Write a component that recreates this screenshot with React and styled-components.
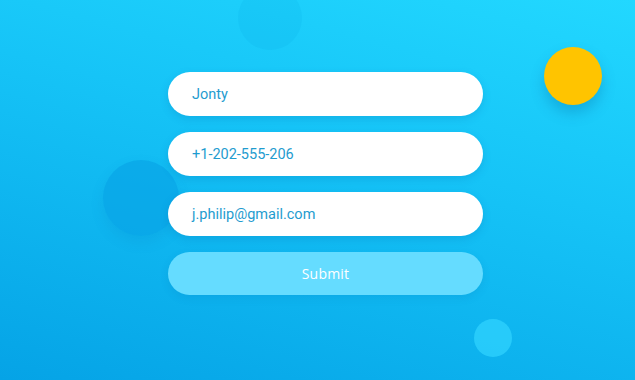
import React from 'react'
import styled, { createGlobalStyle } from 'styled-components'

const GlobalStyle = createGlobalStyle`
  html, body {
    margin: 0;
    padding: 0;
  }
  body {
    font-family: Roboto, "Liberation Sans", sans-serif;
  }
`;

const Page = styled.div`
  position: relative;
  width: 635px;
  height: 380px;
  overflow: hidden;
  background: linear-gradient(195deg, #22d8ff 0%, #16c4f7 40%, #05a3e6 100%);
  display: flex;
  justify-content: center;
  align-items: flex-start;
`;

const Bubble = styled.div`
  position: absolute;
  left: ${({ x }) => x}px;
  top: ${({ y }) => y}px;
  width: ${({ size }) => size}px;
  height: ${({ size }) => size}px;
  border-radius: 50%;
  background: ${({ color }) => color};
  box-shadow: ${({ shadow }) => shadow || 'none'};
`;

const Form = styled.form`
  position: relative;
  z-index: 1;
  margin-top: 72px;
  margin-left: 16px;
  width: 315px;
  display: flex;
  flex-direction: column;
  gap: 16px;
`;

const Field = styled.div`
  height: 44px;
  border-radius: 22px;
  background: #ffffff;
  display: flex;
  align-items: center;
  padding: 0 24px;
  box-sizing: border-box;
  font-size: 14.5px;
  color: #1f9ccf;
  box-shadow: 0 3px 8px rgba(0, 90, 160, 0.18);
`;

const Submit = styled.button`
  height: 43px;
  border: none;
  border-radius: 22px;
  background: #65dcff;
  color: #ffffff;
  font-family: "Open Sans", "Noto Sans", sans-serif;
  font-size: 14px;
  letter-spacing: 0.2px;
  box-shadow: 0 3px 8px rgba(0, 90, 160, 0.12);
  cursor: pointer;
`;

const fields = ['Jonty', '+1-202-555-206', 'j.philip@gmail.com']

export default function App() {
  return (
    <>
      <GlobalStyle />
      <Page>
        <Bubble x={238} y={-14} size={64} color="rgba(10, 170, 225, 0.15)" />
        <Bubble x={103} y={160} size={76} color="rgba(6, 160, 228, 0.6)" shadow="0 6px 14px rgba(0, 100, 170, 0.12)" />
        <Bubble x={474} y={319} size={38} color="rgba(50, 212, 255, 0.7)" />
        <Bubble x={544} y={47} size={58} color="#ffc400" shadow="0 8px 14px rgba(0, 80, 140, 0.25)" />
        <Form onSubmit={(e) => e.preventDefault()}>
          {fields.map((f) => (
            <Field key={f}>{f}</Field>
          ))}
          <Submit type="submit">Submit</Submit>
        </Form>
      </Page>
    </>
  )
}
